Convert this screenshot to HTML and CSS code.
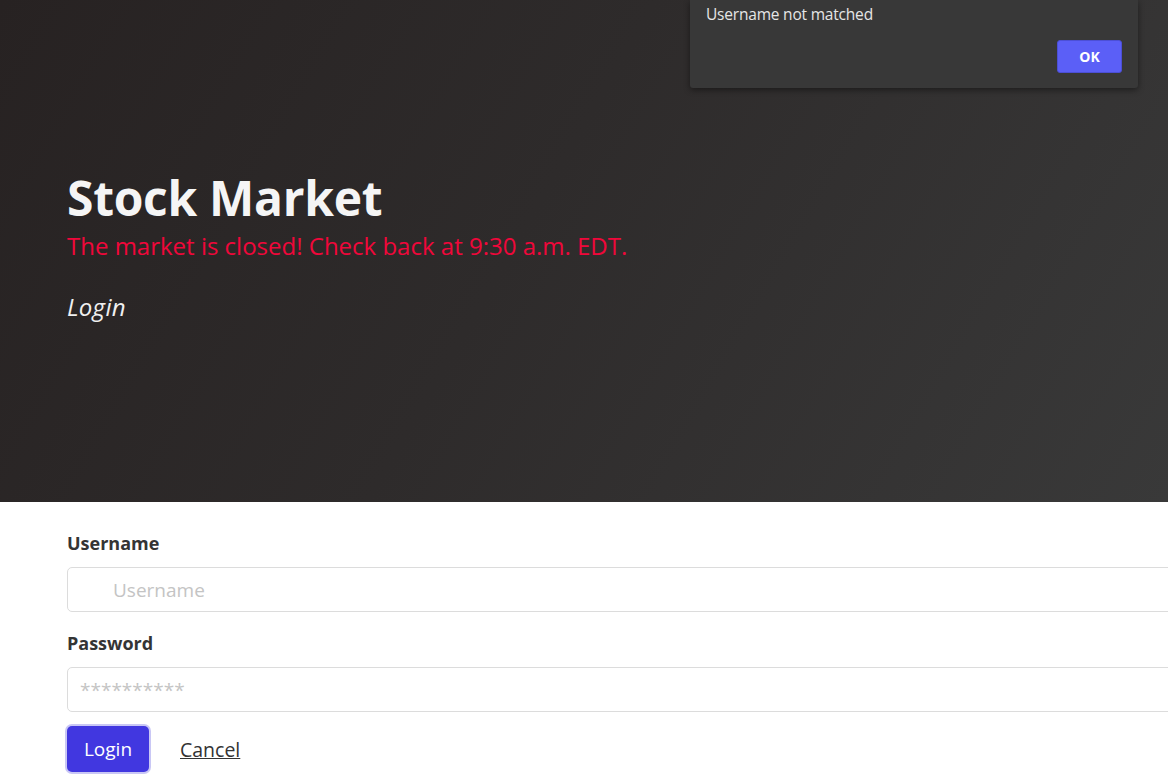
FILE: index.html
```html
<!DOCTYPE html>
<html>
<head>
<meta charset="utf-8">
<link rel="stylesheet" href="styles.css">
</head>
<body>
<div class="page">
  <header class="hero">
    <h1 class="title">Stock Market</h1>
    <p class="status">The market is closed! Check back at 9:30 a.m. EDT.</p>
    <p class="subtitle">Login</p>
    <div class="alert">
      <p class="alert-text">Username not matched</p>
      <div class="alert-actions"><button class="alert-ok">OK</button></div>
    </div>
  </header>
  <form class="form">
    <label class="label">Username</label>
    <div class="field"><input class="input input-user" placeholder="Username"></div>
    <label class="label">Password</label>
    <div class="field field-last"><input class="input" placeholder="**********"></div>
    <div class="actions">
      <button class="btn" type="button">Login</button>
      <a class="cancel" href="#">Cancel</a>
    </div>
  </form>
</div>
</body>
</html>
```
FILE: styles.css
```css
html, body { margin: 0; padding: 0; }
body {
  font-family: "Open Sans", "Noto Sans", sans-serif;
  background: #fff;
  overflow: hidden;
  width: 1168px;
  height: 784px;
}
.page { width: 1168px; }
.hero {
  position: relative;
  height: 502px;
  box-sizing: border-box;
  padding: 166px 0 0 67px;
  background: linear-gradient(120deg, #272222 0%, #2e2b2b 45%, #393939 100%);
}
.title {
  margin: 0;
  color: #f5f5f5;
  font-size: 48px;
  font-weight: 700;
  line-height: 64px;
  letter-spacing: -0.3px;
}
.status {
  margin: 0;
  color: #f0073a;
  font-size: 24px;
  line-height: 32px;
  letter-spacing: 0;
}
.subtitle {
  margin: 30px 0 0;
  color: #f0f0f0;
  font-size: 24px;
  font-style: italic;
  line-height: 30px;
  letter-spacing: 0.3px;
}
.alert {
  position: absolute;
  top: 0;
  right: 30px;
  width: 448px;
  height: 88px;
  box-sizing: border-box;
  background: #383838;
  border-radius: 0 0 3px 3px;
  box-shadow: 0 2px 6px rgba(0,0,0,0.45);
  padding: 4px 16px 0 16px;
}
.alert-text {
  margin: 0;
  color: #e6e6e6;
  font-size: 15.5px;
  line-height: 20px;
  letter-spacing: -0.2px;
}
.alert-actions {
  display: flex;
  justify-content: flex-end;
  margin-top: 16px;
}
.alert-ok {
  width: 65px;
  height: 33px;
  border: 1px solid #4c4fd6;
  border-radius: 3px;
  background: #5b5ff7;
  color: #fff;
  font-family: inherit;
  font-weight: 700;
  font-size: 14px;
}
.form {
  width: 1300px;
  box-sizing: border-box;
  padding: 29px 0 0 67px;
  display: flex;
  flex-direction: column;
}
.label {
  color: #343434;
  font-size: 18px;
  font-weight: 700;
  line-height: 24px;
  height: 26px;
}
.field { margin: 10px 0 19px; }
.field-last { margin-bottom: 14px; }
.input {
  width: 100%;
  height: 45px;
  box-sizing: border-box;
  border: 1px solid #dcdcdc;
  border-radius: 5px;
  padding: 0 12px;
  font-family: inherit;
  font-size: 19px;
  color: #333;
  background: #fff;
}
.input::placeholder { color: #c4c4c4; }
.input-user { padding-left: 45px; }
.actions {
  display: flex;
  align-items: center;
  gap: 31px;
}
.btn {
  width: 82px;
  height: 46px;
  border: none;
  border-radius: 5px;
  background: #4137e0;
  color: #fff;
  font-family: inherit;
  font-size: 19px;
  box-shadow: 0 0 0 2px #c9c7f5;
}
.cancel {
  color: #333;
  font-size: 19.5px;
  text-decoration: underline;
}
```
